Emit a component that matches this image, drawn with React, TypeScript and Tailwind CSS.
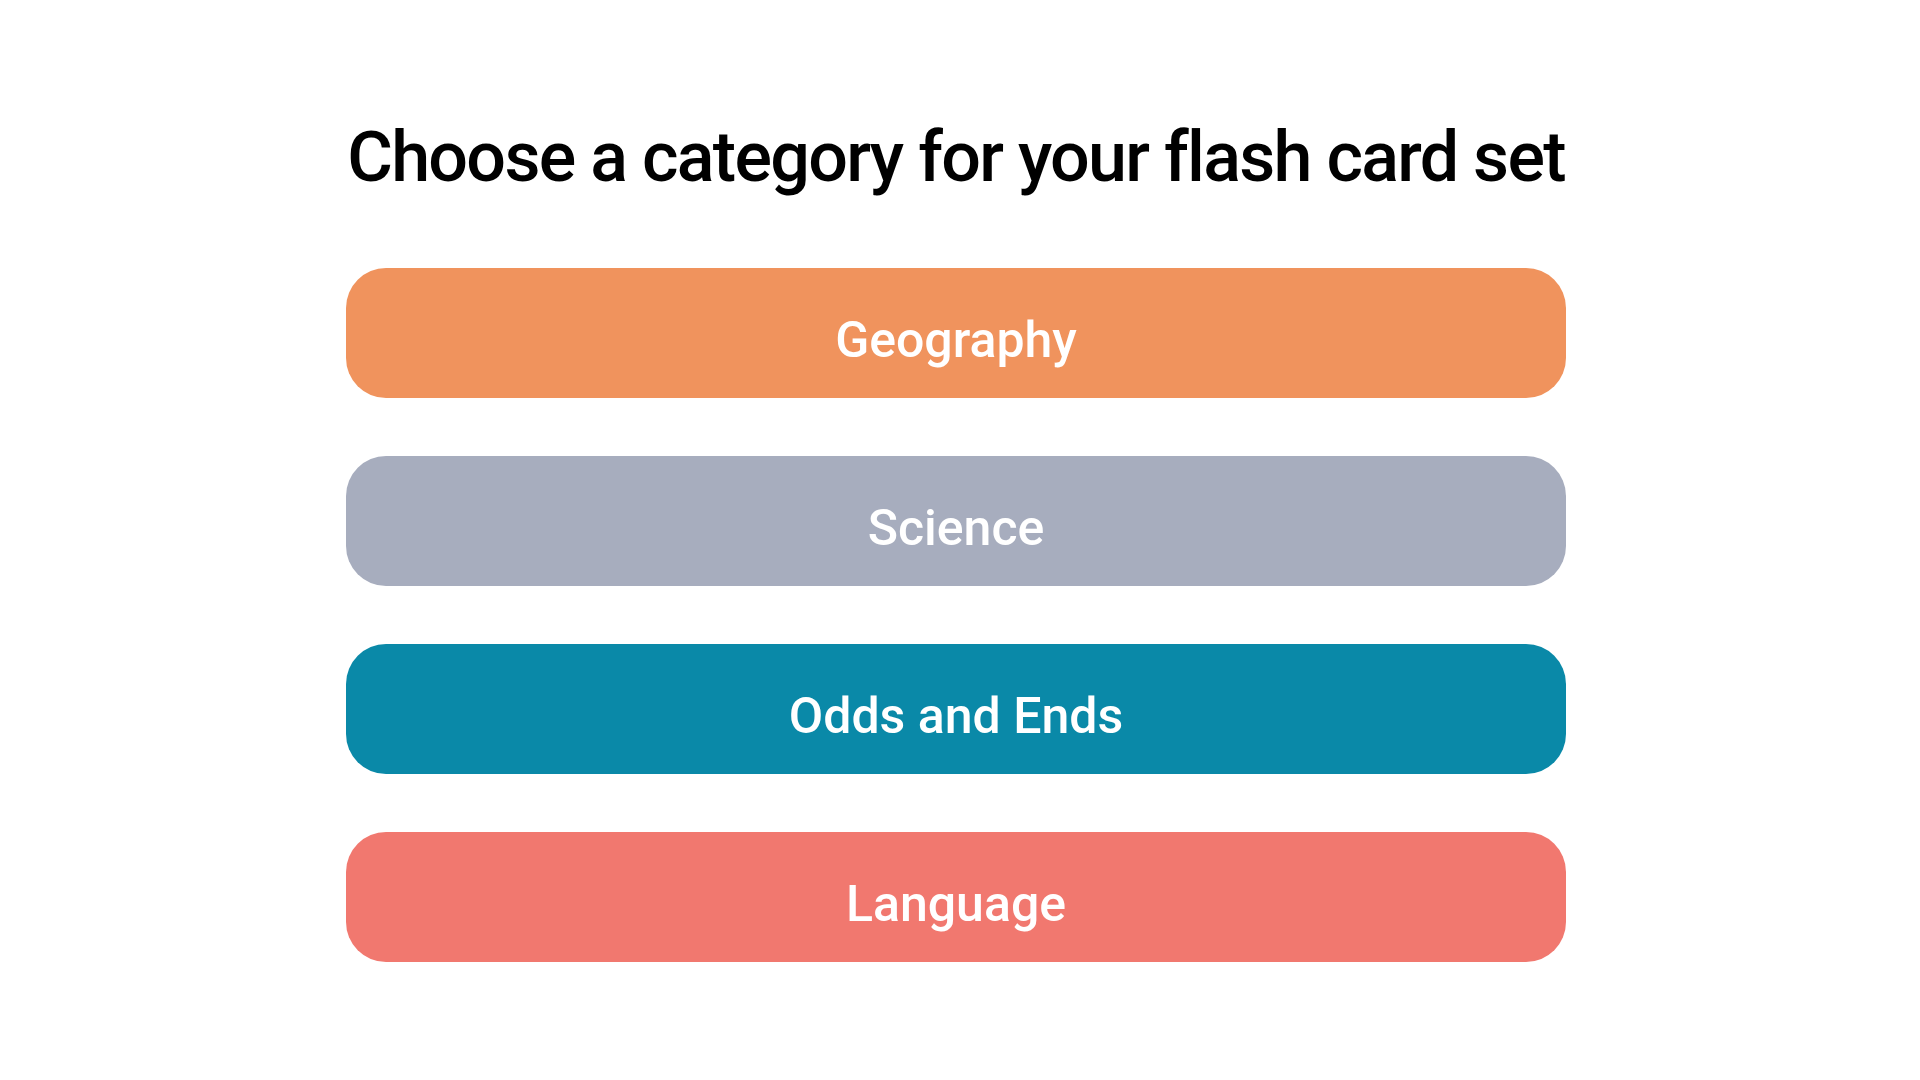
import React from 'react';

interface categoryProps {
  name: string;
  color: string;
}

const categories: categoryProps[] = [
  { name: 'Geography', color: 'bg-[#f0935d]' },
  { name: 'Science', color: 'bg-[#a7adbe]' },
  { name: 'Odds and Ends', color: 'bg-[#0a89a8]' },
  { name: 'Language', color: 'bg-[#f1786f]' },
];

export default function App() {
  return (
    <main className="min-h-screen w-full bg-white font-['Roboto',sans-serif]">
      <div className="ml-[346px] flex w-[1220px] flex-col items-center pt-[121px]">
        {/* Heading */}
        <h1 className="whitespace-nowrap text-[70px] font-medium leading-[72px] tracking-[-1.7px] text-black">
          Choose a category for your flash card set
        </h1>

        {/* Category buttons */}
        <div className="mt-[75px] flex w-full flex-col gap-[58px]">
          {categories.map((cat) => (
            <button
              key={cat.name}
              className={`flex h-[130px] w-full items-center justify-center rounded-[40px] pt-[14px] ${cat.color} text-[50px] font-medium text-white`}
            >
              {cat.name}
            </button>
          ))}
        </div>
      </div>
    </main>
  );
}
